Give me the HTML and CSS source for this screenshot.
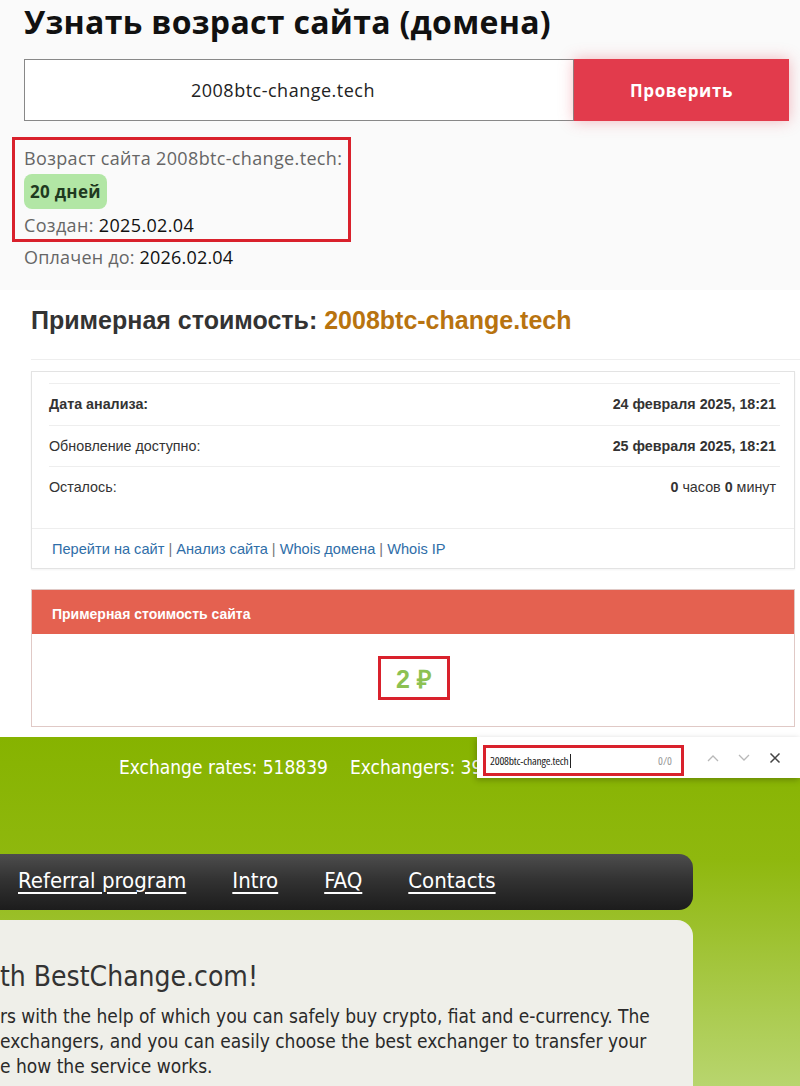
FILE: index.html
```html
<!DOCTYPE html>
<html lang="ru">
<head>
<meta charset="utf-8">
<title>Возраст сайта</title>
<link rel="stylesheet" href="styles.css">
</head>
<body>
<div class="page">
  <section class="age">
    <h1 class="age-title">Узнать возраст сайта (домена)</h1>
    <div class="age-form">
      <div class="age-input">2008btc-change.tech</div>
      <div class="age-btn">Проверить</div>
    </div>
    <div class="age-result">
      <div class="age-line">Возраст сайта 2008btc-change.tech:</div>
      <div class="age-badge">20 дней</div>
      <div class="age-line">Создан: <span class="val">2025.02.04</span></div>
    </div>
    <div class="age-line age-paid">Оплачен до: <span class="val">2026.02.04</span></div>
  </section>

  <section class="cost">
    <h2 class="cost-title">Примерная стоимость: <span class="dom">2008btc-change.tech</span></h2>
    <div class="cost-rule"></div>
    <div class="cost-card">
      <div class="cost-rows">
        <div class="cost-row"><span class="b">Дата анализа:</span><span class="b">24 февраля 2025, 18:21</span></div>
        <div class="cost-row"><span>Обновление доступно:</span><span class="b">25 февраля 2025, 18:21</span></div>
        <div class="cost-row"><span>Осталось:</span><span><b>0</b> часов <b>0</b> минут</span></div>
      </div>
      <div class="cost-links"><a>Перейти на сайт</a> | <a>Анализ сайта</a> | <a>Whois домена</a> | <a>Whois IP</a></div>
    </div>
    <div class="price-panel">
      <div class="price-head">Примерная стоимость сайта</div>
      <div class="price-body"><span class="price">2 ₽</span></div>
    </div>
  </section>

  <section class="bc">
    <div class="bc-stats"><span>Exchange rates: 518839</span><span>Exchangers: 39</span></div>
    <nav class="bc-nav">
      <a>Referral program</a><a>Intro</a><a>FAQ</a><a>Contacts</a>
    </nav>
    <div class="bc-content">
      <div class="bc-h">th BestChange.com!</div>
      <p class="bc-p">rs with the help of which you can safely buy crypto, fiat and e-currency. The<br>exchangers, and you can easily choose the best exchanger to transfer your<br>e how the service works.</p>
    </div>
    <div class="findbar">
      <div class="find-input"><span class="find-text">2008btc-change.tech</span><span class="caret"></span><span class="find-count">0/0</span></div>
      <svg class="find-ico" width="12" height="8" viewBox="0 0 12 8"><path d="M1 7 L6 2 L11 7" fill="none" stroke="#b8b8b8" stroke-width="1.3"/></svg>
      <svg class="find-ico" width="12" height="8" viewBox="0 0 12 8"><path d="M1 1 L6 6 L11 1" fill="none" stroke="#b8b8b8" stroke-width="1.3"/></svg>
      <svg class="find-ico" width="12" height="12" viewBox="0 0 12 12"><path d="M1.5 1.5 L10.5 10.5 M10.5 1.5 L1.5 10.5" fill="none" stroke="#444" stroke-width="1.5"/></svg>
    </div>
  </section>
</div>
</body>
</html>
```
FILE: styles.css
```css
* { box-sizing: border-box; }
html, body { margin: 0; padding: 0; }
body { width: 800px; height: 1086px; overflow: hidden; background: #fff; }
.page { display: flex; flex-direction: column; width: 800px; }

/* Section 1 */
.age {
  height: 290px;
  background: #fafafa;
  padding: 0 0 0 24px;
  font-family: "Open Sans", "Noto Sans", sans-serif;
  display: flex;
  flex-direction: column;
}
.age-title {
  margin: 0;
  font-size: 32px;
  line-height: 44px;
  font-weight: 700;
  color: #111;
  letter-spacing: 0.3px;
}
.age-form {
  display: flex;
  margin-top: 15px;
  height: 62px;
}
.age-input {
  width: 550px;
  border: 1px solid #888;
  background: #fff;
  display: flex;
  align-items: center;
  justify-content: center;
  padding-right: 32px;
  font-size: 18px;
  letter-spacing: 0.5px;
  color: #222;
}
.age-btn {
  width: 215px;
  background: #e23b4c;
  color: #fff;
  font-weight: 700;
  font-size: 17px;
  display: flex;
  align-items: center;
  justify-content: center;
  box-shadow: 0 0 14px rgba(226, 59, 76, 0.35);
  letter-spacing: 0.6px;
}
.age-result {
  margin: 16px 0 0 -12px;
  width: 339px;
  height: 105px;
  border: 3px solid #d9212c;
  padding: 4px 0 0 9px;
  display: flex;
  flex-direction: column;
  align-items: flex-start;
}
.age-line {
  font-size: 18px;
  line-height: 28px;
  letter-spacing: 0.35px;
  color: #666;
  white-space: nowrap;
}
.age-line .val { color: #111; }
.age-badge {
  margin: 2px 0 2px;
  height: 40px;
  padding: 0 6px;
  background: #b2e6a5;
  border-radius: 8px;
  display: flex;
  align-items: center;
  font-weight: 700;
  font-size: 17px;
  letter-spacing: 0.3px;
  color: #1f3a1f;
}
.age-paid { margin-top: 1px; letter-spacing: 0.2px; }

/* Section 2 */
.cost {
  height: 447px;
  background: #fff;
  font-family: "Liberation Sans", Arial, sans-serif;
  padding: 0 5px 0 31px;
  display: flex;
  flex-direction: column;
}
.cost-title {
  margin: 15px 0 0;
  font-size: 25px;
  line-height: 30px;
  font-weight: 700;
  color: #333;
}
.cost-title .dom { color: #b8730f; }
.cost-rule {
  margin: 24px -5px 0 0;
  height: 1px;
  background: #eeeeee;
}
.cost-card {
  margin-top: 11px;
  height: 198px;
  border: 1px solid #e3e3e3;
  box-shadow: 0 1px 2px rgba(0,0,0,0.05);
  display: flex;
  flex-direction: column;
}
.cost-rows {
  padding: 11px 14px 0 17px;
  height: 157px;
  border-bottom: 1px solid #eee;
}
.cost-row {
  display: flex;
  justify-content: space-between;
  align-items: center;
  height: 41.5px;
  border-top: 1px solid #eee;
  font-size: 14.3px;
  color: #333;
}
.cost-row > span:last-child { padding-right: 4px; }
.cost-row .b, .cost-row b { font-weight: 700; }
.cost-links {
  flex: 1;
  display: flex;
  align-items: center;
  padding-left: 20px;
  font-size: 14.6px;
  color: #777;
  white-space: pre;
}
.cost-links a { color: #2f6ea8; }
.price-panel {
  margin-top: 20px;
  height: 138px;
  border: 1px solid #e0c9c6;
  display: flex;
  flex-direction: column;
}
.price-head {
  height: 44px;
  background: #e46150;
  color: #fff;
  font-weight: 700;
  font-size: 14px;
  display: flex;
  align-items: center;
  padding: 3px 0 0 20px;
}
.price-body {
  flex: 1;
  display: flex;
  align-items: center;
  justify-content: center;
  padding-bottom: 4px;
}
.price {
  display: inline-flex;
  align-items: center;
  justify-content: center;
  width: 72px;
  height: 44px;
  border: 3px solid #d9212c;
  color: #8cc152;
  font-weight: 700;
  font-size: 25px;
  margin-left: 2px;
}

/* Section 3 */
.bc {
  position: relative;
  height: 349px;
  background: linear-gradient(to bottom, #86b300 0%, #8fb80e 35%, #a3c53c 65%, #b8d56e 100%);
  font-family: "DejaVu Sans Condensed", "DejaVu Sans", sans-serif;
  font-stretch: condensed;
  display: flex;
  flex-direction: column;
}
.bc-stats {
  margin-top: 18px;
  padding-left: 119px;
  display: flex;
  gap: 22px;
  color: #fff;
  font-size: 19px;
  line-height: 24px;
  white-space: nowrap;
}
.bc-nav {
  margin-top: 75px;
  width: 693px;
  height: 56px;
  border-radius: 0 14px 14px 0;
  background: linear-gradient(to bottom, #4d4d4d 0%, #333 45%, #1c1c1c 100%);
  display: flex;
  align-items: center;
  gap: 46px;
  padding: 0 0 3px 18px;
}
.bc-nav a {
  color: #fff;
  font-size: 22px;
  text-decoration: underline;
  text-underline-offset: 4px;
  text-decoration-thickness: 1.5px;
}
.bc-content {
  margin-top: 10px;
  width: 693px;
  flex: 1;
  background: #efefe9;
  border-radius: 0 16px 0 0;
  padding-top: 39px;
  color: #333;
}
.bc-h {
  font-size: 28px;
  line-height: 36px;
}
.bc-p {
  margin: 9px 0 0;
  font-size: 19px;
  line-height: 25px;
  color: #2a2a2a;
  white-space: nowrap;
}
.findbar {
  position: absolute;
  left: 477px;
  top: 0;
  width: 323px;
  height: 41px;
  background: #fff;
  box-shadow: -1px 2px 6px rgba(0,0,0,0.25);
  display: flex;
  align-items: center;
  padding-left: 6px;
  font-family: "Open Sans", "Noto Sans", sans-serif;
}
.find-input {
  width: 201px;
  height: 31px;
  border: 3px solid #d9212c;
  display: flex;
  align-items: center;
  padding-left: 4px;
  font-size: 11.5px;
  color: #222;
  margin-top: 6px;
}
.find-text { letter-spacing: -0.2px; }
.caret { width: 1px; height: 14px; background: #222; margin-left: 1px; }
.find-count { margin-left: auto; margin-right: 9px; color: #999; }
.find-ico { margin-left: 19px; }
.find-ico:first-of-type { margin-left: 23px; }
```
